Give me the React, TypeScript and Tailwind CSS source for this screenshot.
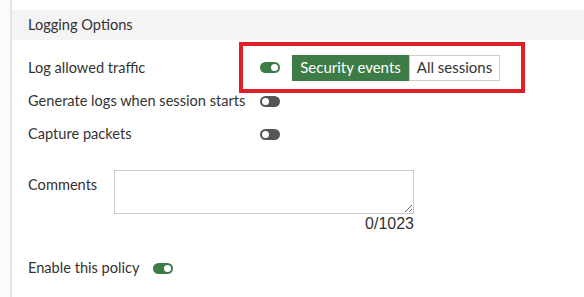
import React from "react";

function Toggle({ on }: { on: boolean }) {
  return on ? (
    <div className="w-[20px] h-[11px] rounded-full bg-[#3d7c47] flex items-center justify-end pr-[2px] shrink-0">
      <div className="w-[7px] h-[7px] rounded-full bg-white" />
    </div>
  ) : (
    <div className="w-[20px] h-[11px] rounded-full bg-[#555555] flex items-center justify-start pl-[2px] shrink-0">
      <div className="w-[7px] h-[7px] rounded-full bg-white" />
    </div>
  );
}

export default function App() {
  return (
    <div
      className="w-[584px] h-[297px] bg-white flex overflow-hidden text-[14.6px] text-[#333333]"
      style={{ fontFamily: "Lato, 'Open Sans', sans-serif" }}
    >
      <div className="w-[12px] bg-[#fbfbfb] border-r-2 border-[#e6e6e6] shrink-0" />
      <div className="flex-1 flex flex-col pt-[10px]">
        <div className="h-[30px] bg-[#f4f4f4] flex items-center pl-[16px]">Logging Options</div>

        <div className="flex items-center h-[51px] mt-[2px] pl-[16px]">
          <div className="w-[211px]">Log allowed traffic</div>
          <div className="h-full border-4 border-[#e11d27] flex items-center pl-[17px] pr-[21px]">
            <Toggle on />
            <div className="flex ml-[12px] h-[26px] text-[15px]">
              <div className="bg-[#3d7c47] text-white flex items-center w-[117px] justify-center whitespace-nowrap">Security events</div>
              <div className="bg-white border border-[#cccccc] flex items-center justify-center w-[91px] whitespace-nowrap">All sessions</div>
            </div>
          </div>
        </div>

        <div className="flex items-center h-[16px] pl-[16px]">
          <div className="w-[232px] whitespace-nowrap">Generate logs when session starts</div>
          <Toggle on={false} />
        </div>

        <div className="flex items-center h-[16px] mt-[17px] pl-[16px]">
          <div className="w-[232px]">Capture packets</div>
          <Toggle on={false} />
        </div>

        <div className="flex mt-[28px] pl-[16px]">
          <div className="w-[86px] pt-[4px]">Comments</div>
          <div className="flex flex-col items-end">
            <textarea className="w-[300px] h-[44px] border border-[#cccccc] bg-white resize-y block" />
            <div className="text-[16px] leading-[18px] mt-[1px]" style={{ fontFamily: "'Liberation Sans', Arial, sans-serif" }}>0/1023</div>
          </div>
        </div>

        <div className="flex items-center h-[16px] mt-[27px] pl-[16px]">
          <div className="mr-[13px]">Enable this policy</div>
          <Toggle on />
        </div>
      </div>
    </div>
  );
}
